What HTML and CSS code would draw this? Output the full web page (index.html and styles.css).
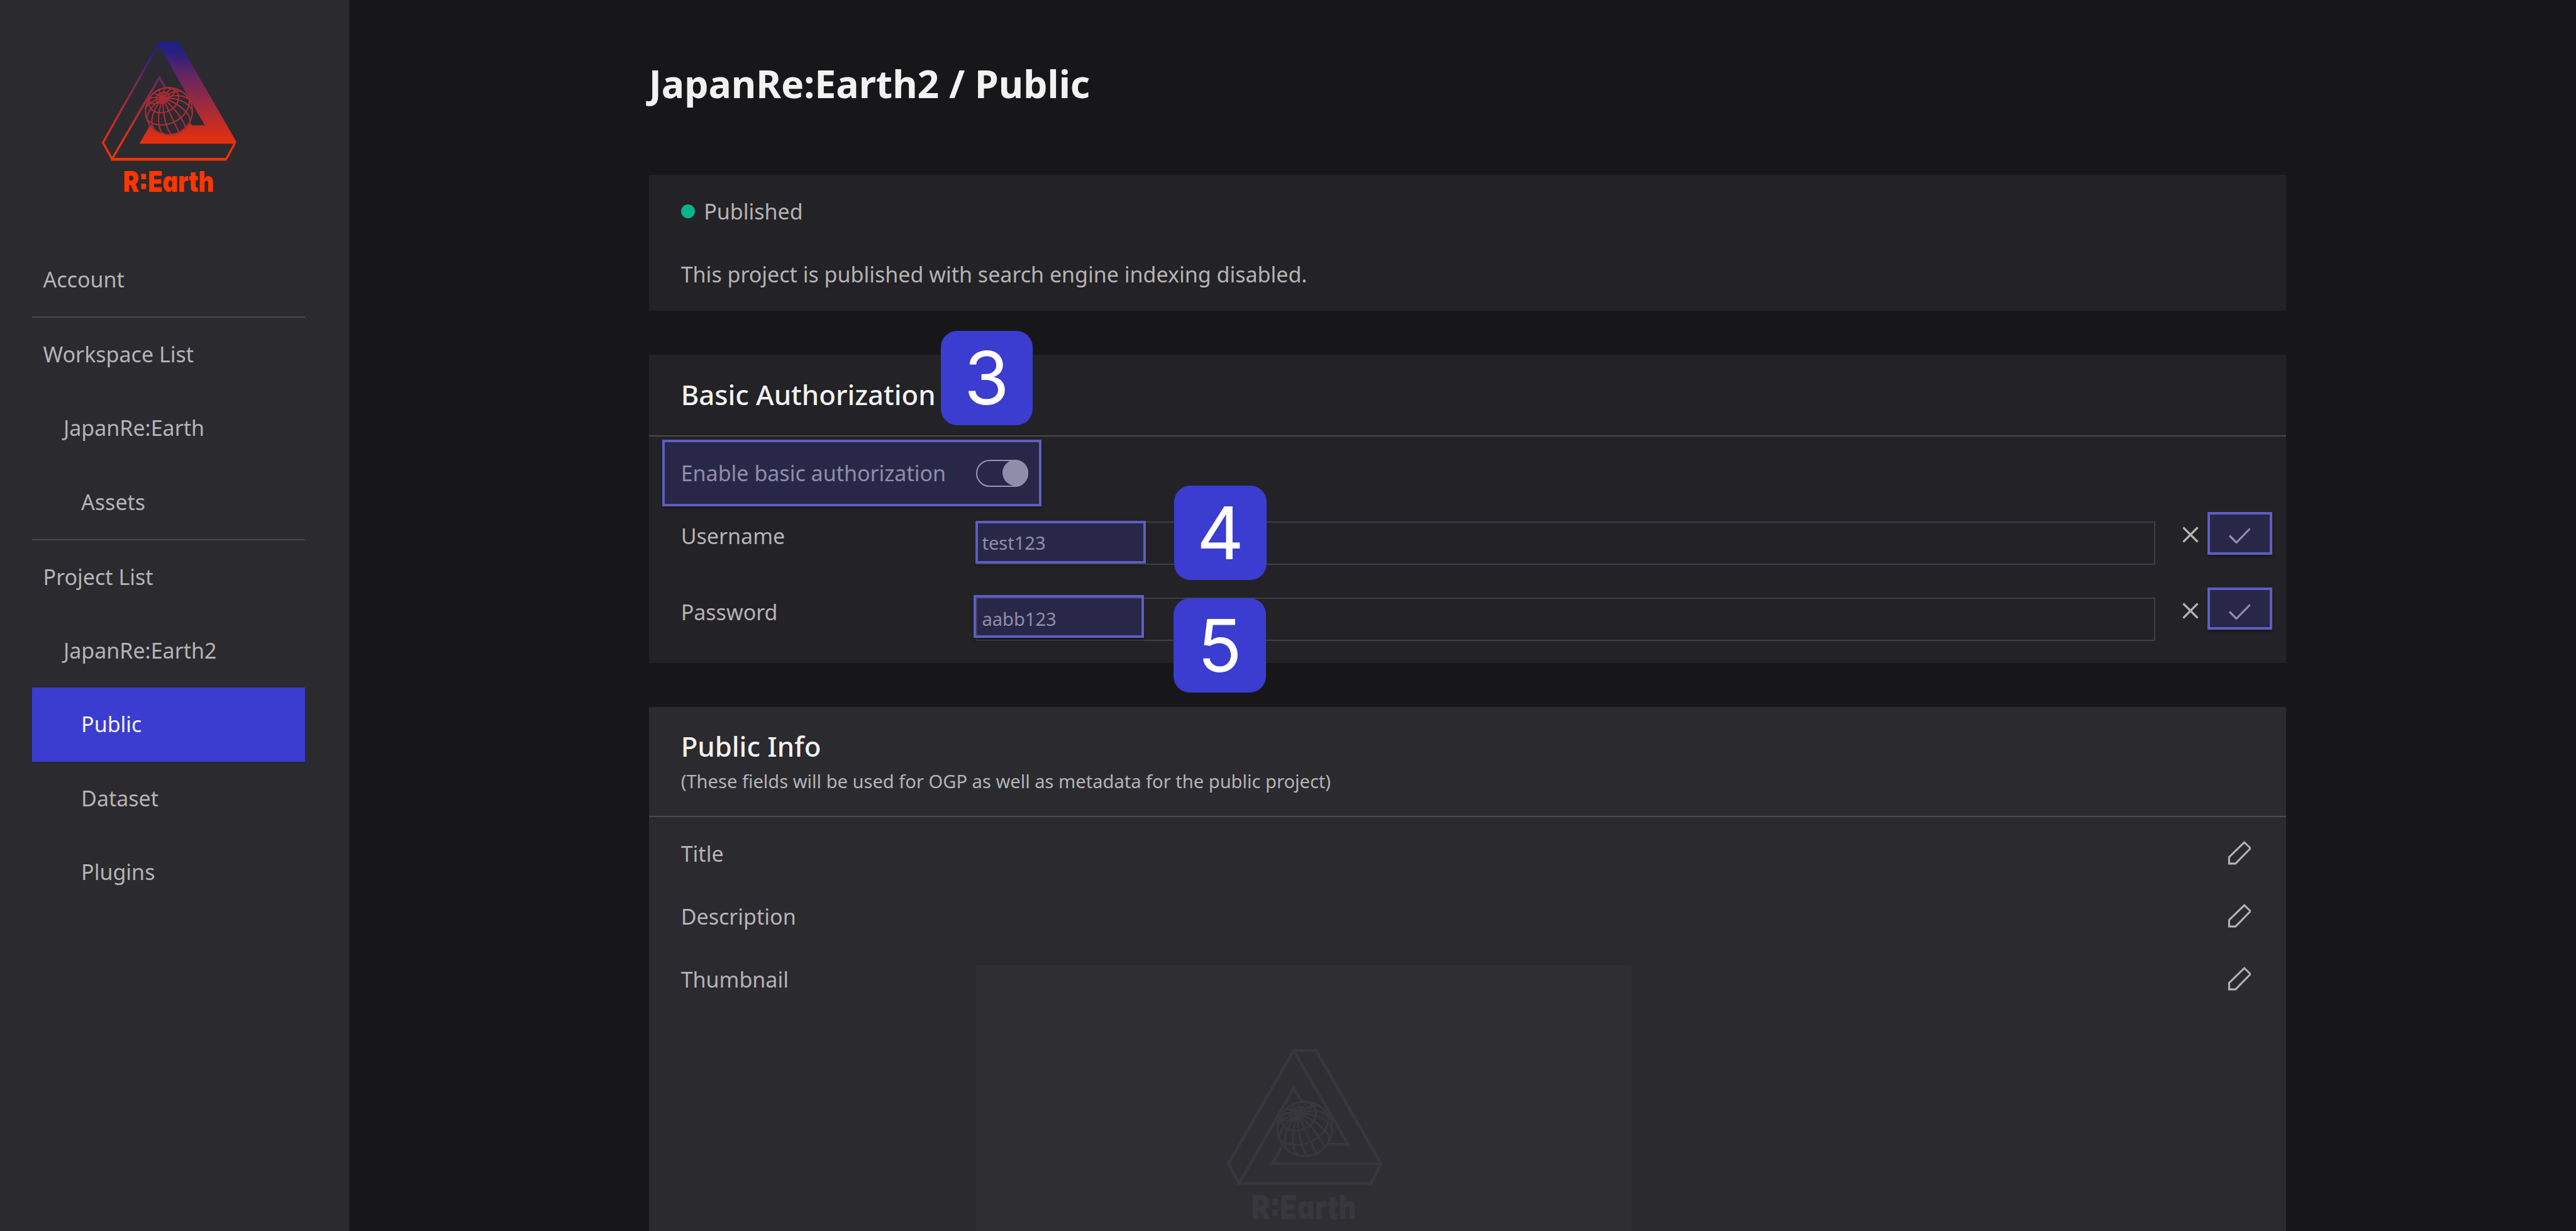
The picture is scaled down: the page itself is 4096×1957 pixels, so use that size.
FILE: index.html
```html
<!DOCTYPE html>
<html lang="en">
<head>
<meta charset="utf-8">
<title>JapanRe:Earth2 / Public</title>
<link rel="stylesheet" href="styles.css">
</head>
<body>
<svg class="defs" aria-hidden="true">
  <defs>
    <linearGradient id="flame" gradientUnits="userSpaceOnUse" x1="0" y1="72" x2="0" y2="700">
      <stop offset="0" stop-color="#1e1f8e"/>
      <stop offset="0.08" stop-color="#26207f"/>
      <stop offset="0.3" stop-color="#6a265f"/>
      <stop offset="0.5" stop-color="#962a42"/>
      <stop offset="0.7" stop-color="#c62c22"/>
      <stop offset="0.84" stop-color="#e4300f"/>
      <stop offset="1" stop-color="#f43304"/>
    </linearGradient>
    <g id="globe" fill="none">
      <circle r="124"/>
      <ellipse cx="-35" cy="-74" rx="15" ry="11" transform="rotate(-25 -35 -74)"/>
      <ellipse cx="-33" cy="-70" rx="36" ry="27" transform="rotate(-25 -33 -70)"/>
      <ellipse cx="-27" cy="-57" rx="81" ry="62" transform="rotate(-25 -27 -57)"/>
      <path d="M40.7-118A112 85-25 0 1-118-45.500"/>
      <path d="M106-68A126.500 96-25 0 1-120 38"/>
      <path d="M54 113L-54-113"/>
      <path d="M17 124A126 31.600 82.300 0 1-17-124"/>
      <path d="M-26 122A126 58.400 102 0 1 26-122"/>
      <path d="M-74 101A126 76.400 126.200 0 1 74-101"/>
      <path d="M-113 53A126 82.700 154.800 0 1 113-53"/>
      <path d="M-125-8A126 76.400 3.500 0 1 125 8"/>
      <path d="M-111-58A126 58.400 27.700 0 1 111 58"/>
      <path d="M-85-92A126 31.600 47.400 0 1 85 92"/>
    </g>
  </defs>
</svg>

<div class="page">
  <aside class="sidebar">
    <svg class="logo" viewBox="0 0 900 930" role="img" aria-label="Re:Earth">
      <path fill="url(#flame)" d="M383 72H493L797 600L789 609H284L345 503H559V512H630L387 92Z"/>
      <g fill="none" stroke="url(#flame)" stroke-width="11">
        <path d="M387 80L92 603L140 690L390 260L428 326"/>
        <path d="M790 603L743 690"/>
      </g>
      <path fill="#f03204" d="M134 684H748L744 699H134Z"/>
      <circle cx="440" cy="437" r="127" fill="#2b2a2f"/>
      <g stroke="#a92c36" stroke-width="7"><use href="#globe" x="440" y="437"/></g>
      <text class="logo-text" x="198" y="862" textLength="480" lengthAdjust="spacingAndGlyphs" fill="#ff3600">R:Earth</text>
    </svg>
    <nav class="nav">
      <a class="item">Account</a>
      <hr class="rule">
      <a class="item">Workspace List</a>
      <a class="item level1">JapanRe:Earth</a>
      <a class="item level2">Assets</a>
      <hr class="rule">
      <a class="item">Project List</a>
      <a class="item level1">JapanRe:Earth2</a>
      <a class="item level2 active">Public</a>
      <a class="item level2">Dataset</a>
      <a class="item level2">Plugins</a>
    </nav>
  </aside>

  <main class="main">
    <h1 class="heading">JapanRe:Earth2 / Public</h1>

    <section class="card status">
      <p class="row"><span class="dot"></span>Published</p>
      <p class="row">This project is published with search engine indexing disabled.</p>
    </section>

    <section class="card auth">
      <header class="card-head"><h2 class="card-title">Basic Authorization</h2></header>
      <div class="row">
        <span class="label">Enable basic authorization</span>
        <span class="toggle"><span class="knob"></span></span>
      </div>
      <div class="field">
        <span class="label">Username</span>
        <div class="input">test123</div>
        <svg class="icon cross" viewBox="0 0 26 26"><path d="M1.500 1.500L24.500 24.500M24.500 1.500L1.500 24.500"/></svg>
        <svg class="icon check" viewBox="0 0 36 26"><path d="M2 13.500L13 24.500L34.500 2.500"/></svg>
      </div>
      <div class="field">
        <span class="label">Password</span>
        <div class="input">aabb123</div>
        <svg class="icon cross" viewBox="0 0 26 26"><path d="M1.500 1.500L24.500 24.500M24.500 1.500L1.500 24.500"/></svg>
        <svg class="icon check" viewBox="0 0 36 26"><path d="M2 13.500L13 24.500L34.500 2.500"/></svg>
      </div>
    </section>

    <section class="card info">
      <header class="card-head info-head">
        <h2 class="card-title">Public Info</h2>
        <p class="note">(These fields will be used for OGP as well as metadata for the public project)</p>
      </header>
      <div class="row">
        <span class="label">Title</span>
        <svg class="pencil" viewBox="0 0 125 127"><path d="M88 7L121 38L42 119H8V85Z"/></svg>
      </div>
      <div class="row">
        <span class="label">Description</span>
        <svg class="pencil" viewBox="0 0 125 127"><path d="M88 7L121 38L42 119H8V85Z"/></svg>
      </div>
      <div class="row thumb-row">
        <span class="label">Thumbnail</span>
        <div class="thumb">
          <svg class="watermark" viewBox="0 0 1140 1095">
            <g fill="none" stroke="#38373d" stroke-width="15">
              <path d="M568 412L525 342L236 845H932L985 740L643 143H525L180 740L236 842"/>
              <path d="M525 145L812 638H708M462 650L412 740H985"/>
              <g stroke-width="8" transform="translate(583 557) scale(1.160)"><use href="#globe"/></g>
            </g>
            <text class="logo-text mark-text" x="302" y="1034" textLength="554" lengthAdjust="spacingAndGlyphs" fill="#38373d">R:Earth</text>
          </svg>
        </div>
        <svg class="pencil" viewBox="0 0 125 127"><path d="M88 7L121 38L42 119H8V85Z"/></svg>
      </div>
    </section>
  </main>

  <div class="mark mark-toggle"></div>
  <div class="mark mark-user"></div>
  <div class="mark mark-pass"></div>
  <div class="mark mark-ok-user"></div>
  <div class="mark mark-ok-pass"></div>
  <div class="badge badge-3">3</div>
  <div class="badge badge-4">4</div>
  <div class="badge badge-5">5</div>
</div>
</body>
</html>
```
FILE: styles.css
```css
* { box-sizing: border-box; margin: 0; padding: 0; }

body {
  background: #171719;
  color: #b4b4b4;
  font: 34px "Noto Sans", sans-serif;
  overflow: hidden;
}

.defs { position: absolute; width: 0; height: 0; }

.page {
  position: relative;
  display: flex;
  width: 4096px;
  height: 1957px;
  overflow: hidden;
}

/* sidebar */
.sidebar {
  width: 554.5px;
  flex: none;
  background: #2b2a2f;
  padding: 45.2px 69.4px 0 50.9px;
}
.logo { display: block; width: 271.1px; height: 280.2px; margin-left: 84.7px; }
.logo-text {
  font: 900 151px Inter, sans-serif;
  font-feature-settings: "cv11", "ss07";
}
.mark-text { font-size: 172px; }
.nav { margin-top: 60.2px; }
.item {
  display: block;
  height: 117.2px;
  line-height: 117.2px;
  padding-left: 17.7px;
  white-space: nowrap;
}
.level1 { padding-left: 50px; }
.level2 { padding-left: 78.2px; }
.active { background: #3b3cd0; color: #f5f5f7; }
.rule { border: 0; height: 2.4px; background: #4a4a4a; }

/* main column */
.main { width: 2603.2px; flex: none; margin-left: 477.2px; }
.heading {
  height: 277.5px;
  padding-top: 92px;
  font-size: 60.7px;
  line-height: 81px;
  color: #f2f2f2;
}
.card { background: #232226; overflow: hidden; }
.row { display: flex; align-items: center; height: 100px; padding: 0 55.400px 0 51px; }
.label { width: 469.7px; flex: none; line-height: 100px; }

.status { height: 216.6px; padding-top: 8.2px; }
.dot { width: 22px; height: 22px; border-radius: 50%; background: #0bb38c; margin-right: 14.5px; }

.auth { height: 490px; margin-top: 69.9px; }
.card-head {
  height: 130.200px;
  padding: 33.6px 51px 0;
  border-bottom: 2.4px solid #4a4a4a;
  margin-bottom: 8.2px;
}
.card-title { font-size: 43.7px; font-weight: 500; line-height: 59.5px; color: #f2f2f2; }

.toggle {
  display: flex;
  justify-content: flex-end;
  width: 83px;
  height: 43.4px;
  border: 2.4px solid #c0c0c0;
  border-radius: 22px;
}
.knob { width: 41px; height: 41px; margin: -1.2px; border-radius: 50%; background: #b4b4b4; }

.field { display: flex; align-items: flex-start; height: 121.1px; padding-left: 51px; }
.input {
  width: 1874.2px;
  height: 69px;
  margin-top: 26.700px;
  padding-left: 7px;
  border: 2.4px solid #3f3e45;
  font-size: 29.1px;
  line-height: 64.500px;
}
.icon { flex: none; fill: none; stroke: #b4b4b4; stroke-width: 3.2; }
.cross { width: 26px; height: 26px; margin: 34.7px 0 0 43.600px; }
.check { width: 36px; height: 26px; margin: 35.400px 0 0 47px; }

.info { height: 900px; margin-top: 69.6px; background: #2b2a2f; }
.info-head { height: 175.900px; margin-bottom: 7.8px; }
.note { font-size: 29.1px; line-height: 51.4px; }
.pencil {
  width: 37.7px;
  height: 38.3px;
  margin-left: auto;
  position: relative;
  top: -1.200px;
  fill: none;
  stroke: #b4b4b4;
  stroke-width: 10;
}
.thumb-row { height: auto; align-items: flex-start; }
.thumb-row .pencil { margin-top: 30.800px; }
.thumb { width: 1042px; height: 500px; margin-top: 26.5px; padding: 93.1px 0 0 346.2px; background: #2f2e33; }
.watermark { display: block; width: 343.4px; height: 329.9px; }

/* walkthrough annotations drawn over the page */
.mark {
  position: absolute;
  background: rgba(55, 54, 148, 0.3);
  border: 4.5px solid #5f5dc4;
  background-clip: padding-box;
  box-shadow: 0 4px 4px rgba(0, 0, 0, 0.25);
}
.mark-toggle { left: 1053px; top: 698.8px; width: 602.7px; height: 106.1px; }
.mark-user { left: 1551px; top: 827.8px; width: 271px; height: 67.9px; }
.mark-pass { left: 1548.3px; top: 946.4px; width: 271px; height: 67.9px; }
.mark-ok-user { left: 3510.3px; top: 814.3px; width: 103.1px; height: 67.8px; }
.mark-ok-pass { left: 3510.3px; top: 933.6px; width: 103.1px; height: 67.8px; }

.badge {
  position: absolute;
  width: 146.5px;
  height: 150px;
  border-radius: 26px;
  background: #3b3cd0;
  color: #fff;
  font: 400 116px/150px Inter, sans-serif;
  text-align: center;
}
.badge-3 { left: 1495.7px; top: 526px; }
.badge-4 { left: 1867.2px; top: 772px; }
.badge-5 { left: 1866.3px; top: 950.5px; }
```
